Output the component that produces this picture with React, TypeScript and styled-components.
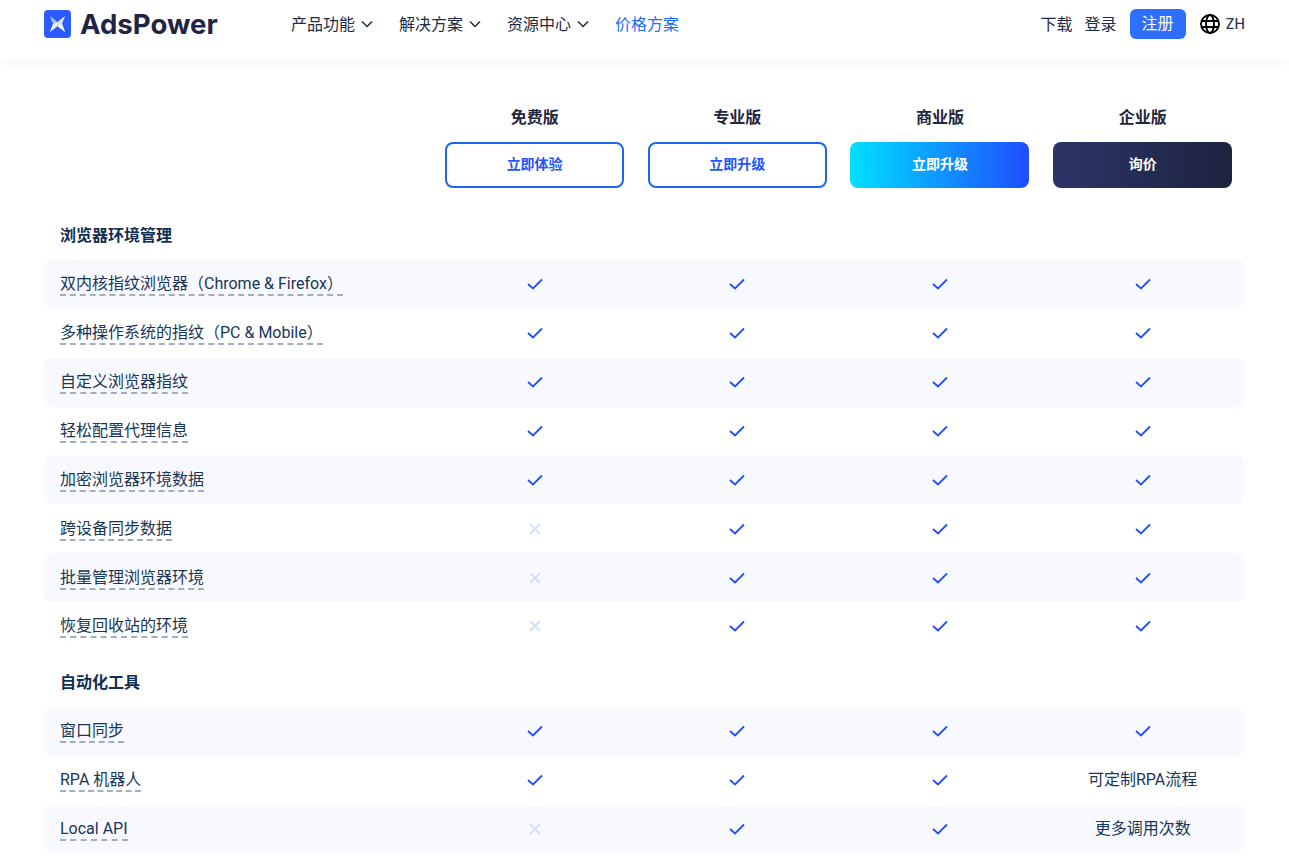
import styled, { createGlobalStyle } from 'styled-components';

const GlobalStyle = createGlobalStyle`
  * {
    box-sizing: border-box;
  }
  html, body {
    margin: 0;
    height: 866px;
    overflow: hidden;
    background: #fff;
    font-family: Inter, "Noto Sans CJK SC", sans-serif;
  }
`;

const Header = styled.header`
  display: flex;
  align-items: center;
  height: 60px;
  padding: 0 44px 13px 44px;
  background: #fff;
  box-shadow: 0 2px 12px rgba(0, 0, 0, 0.05);
`;

const Brand = styled.div`
  display: flex;
  align-items: center;
  gap: 9px;
  width: 247px;
`;

const Wordmark = styled.span`
  font-size: 27.6px;
  font-weight: 700;
  line-height: 30px;
  color: #1f2547;
`;

const Nav = styled.nav`
  display: flex;
  gap: 26px;
  flex: 1;
`;

const NavItem = styled.a<{ $active?: boolean }>`
  display: flex;
  align-items: center;
  gap: 6px;
  font-size: 16px;
  line-height: 22px;
  color: ${(p) => (p.$active ? '#1a6bff' : '#1f2a44')};
`;

const HeaderActions = styled.div`
  display: flex;
  align-items: center;
`;

const TextLink = styled.a`
  margin-right: 12px;
  font-size: 16px;
  line-height: 22px;
  color: #1f2a44;
`;

const SignUp = styled.button`
  width: 56px;
  height: 30px;
  margin-left: 1px;
  padding: 0 0 3px;
  border: 0;
  border-radius: 6px;
  background: #2f6fff;
  color: #fff;
  font-family: inherit;
  font-size: 16px;
`;

const Lang = styled.div`
  display: flex;
  align-items: center;
  gap: 6px;
  margin-left: 14px;
  font-size: 14px;
  font-weight: 500;
  color: #26365c;
`;

const Main = styled.main`
  width: 1200px;
  margin-left: 44px;
`;

const PlanGrid = styled.div`
  display: grid;
  grid-template-columns: 389.3px repeat(4, 202.675px);
  padding-top: 45px;
`;

const PlanColumn = styled.div`
  display: flex;
  flex-direction: column;
  align-items: center;
  gap: 13px;
`;

const PlanName = styled.div`
  font-size: 16px;
  font-weight: 700;
  line-height: 24px;
  color: #23263f;
`;

const PlanButton = styled.button<{ $kind: 'outline' | 'gradient' | 'dark' }>`
  width: 179px;
  height: 46px;
  padding: 0 0 4px;
  border-radius: 8px;
  font-family: inherit;
  font-size: 14px;
  font-weight: 700;
  border: ${(p) => (p.$kind === 'outline' ? '2px solid #1a66f0' : '0')};
  color: ${(p) => (p.$kind === 'outline' ? '#1f55ff' : '#fff')};
  background: ${(p) =>
    p.$kind === 'outline'
      ? '#fff'
      : p.$kind === 'gradient'
        ? 'linear-gradient(90deg, #00e0ff, #1f4dff)'
        : 'linear-gradient(90deg, #2c3568, #1e2340)'};
`;

const SectionTitle = styled.h3<{ $top: number }>`
  margin: ${(p) => p.$top}px 0 13px;
  padding-left: 16px;
  font-size: 16px;
  font-weight: 700;
  line-height: 24px;
  color: #0f2f55;
`;

const Row = styled.div`
  display: grid;
  grid-template-columns: 389.3px repeat(4, 202.675px);
  align-items: center;
  height: 48.86px;
  border-radius: 8px;
  &:nth-of-type(odd) {
    background: #f8f9fe;
  }
`;

const RowList = styled.div``;

const FeatureCell = styled.div`
  padding-left: 16px;
`;

const Feature = styled.span`
  display: inline-block;
  padding-top: 2px;
  font-family: Roboto, "Noto Sans CJK SC", sans-serif;
  font-size: 16px;
  line-height: 20px;
  color: #17365a;
  border-bottom: 2px dashed #a3aebd;
`;

const Cell = styled.div`
  display: flex;
  justify-content: center;
  align-items: center;
  font-family: Roboto, "Noto Sans CJK SC", sans-serif;
  font-size: 16px;
  line-height: 22px;
  color: #17365a;
`;

const Logo = () => (
  <svg width="27" height="28" viewBox="0 0 27 28">
    <rect width="27" height="28" rx="4" fill="#2b5cff" />
    <path d="M6 6l7.500 6v4L6 22l3-8z" fill="#a9c3ff" />
    <path d="M21 6l-7.500 6v4l7.500 6-3-8z" fill="#dbe6ff" />
    <path d="M9 14l4.500-2v4L6 22z" fill="#eef3ff" />
    <path d="M18 14l-4.500 2 7.500 6z" fill="#ffffff" />
  </svg>
);

const Chevron = () => (
  <svg width="12" height="8" viewBox="0 0 12 8" fill="none">
    <path d="M1 1.500l5 5 5-5" stroke="#1f2a44" strokeWidth="1.500" />
  </svg>
);

const Globe = () => (
  <svg width="20" height="20" viewBox="0 0 20 20" fill="none" stroke="#000" strokeWidth="1.900">
    <circle cx="10" cy="10" r="9" />
    <ellipse cx="10" cy="10" rx="4" ry="9" />
    <path d="M1.500 7h17M1.500 13h17" />
  </svg>
);

const Check = () => (
  <svg width="16" height="12" viewBox="0 0 16 12" fill="none">
    <path d="M1 6l5 4.500 9-9" stroke="#1f4dff" strokeWidth="1.800" />
  </svg>
);

const Cross = () => (
  <svg width="12" height="12" viewBox="0 0 12 12" fill="none">
    <path d="M1 1l10 10M11 1L1 11" stroke="#d5defa" strokeWidth="1.800" />
  </svg>
);

type Value = boolean | string;

interface FeatureRow {
  name: string;
  values: Value[];
}

const plans: { name: string; action: string; kind: 'outline' | 'gradient' | 'dark' }[] = [
  { name: '免费版', action: '立即体验', kind: 'outline' },
  { name: '专业版', action: '立即升级', kind: 'outline' },
  { name: '商业版', action: '立即升级', kind: 'gradient' },
  { name: '企业版', action: '询价', kind: 'dark' },
];

const browserRows: FeatureRow[] = [
  { name: '双内核指纹浏览器（Chrome & Firefox）', values: [true, true, true, true] },
  { name: '多种操作系统的指纹（PC & Mobile）', values: [true, true, true, true] },
  { name: '自定义浏览器指纹', values: [true, true, true, true] },
  { name: '轻松配置代理信息', values: [true, true, true, true] },
  { name: '加密浏览器环境数据', values: [true, true, true, true] },
  { name: '跨设备同步数据', values: [false, true, true, true] },
  { name: '批量管理浏览器环境', values: [false, true, true, true] },
  { name: '恢复回收站的环境', values: [false, true, true, true] },
];

const automationRows: FeatureRow[] = [
  { name: '窗口同步', values: [true, true, true, true] },
  { name: 'RPA 机器人', values: [true, true, true, '可定制RPA流程'] },
  { name: 'Local API', values: [false, true, true, '更多调用次数'] },
];

const renderValue = (value: Value) => {
  if (typeof value === 'string') return value;
  return value ? <Check /> : <Cross />;
};

const renderRows = (rows: FeatureRow[]) => (
  <RowList>
    {rows.map((row) => (
      <Row key={row.name}>
        <FeatureCell>
          <Feature>{row.name}</Feature>
        </FeatureCell>
        {row.values.map((value, i) => (
          <Cell key={i}>{renderValue(value)}</Cell>
        ))}
      </Row>
    ))}
  </RowList>
);

const App = () => (
  <>
    <GlobalStyle />
    <Header>
      <Brand>
        <Logo />
        <Wordmark>AdsPower</Wordmark>
      </Brand>
      <Nav>
        <NavItem>产品功能 <Chevron /></NavItem>
        <NavItem>解决方案 <Chevron /></NavItem>
        <NavItem>资源中心 <Chevron /></NavItem>
        <NavItem $active>价格方案</NavItem>
      </Nav>
      <HeaderActions>
        <TextLink>下载</TextLink>
        <TextLink>登录</TextLink>
        <SignUp>注册</SignUp>
        <Lang>
          <Globe />
          ZH
        </Lang>
      </HeaderActions>
    </Header>
    <Main>
      <PlanGrid>
        <div />
        {plans.map((plan) => (
          <PlanColumn key={plan.name}>
            <PlanName>{plan.name}</PlanName>
            <PlanButton $kind={plan.kind}>{plan.action}</PlanButton>
          </PlanColumn>
        ))}
      </PlanGrid>
      <SectionTitle $top={35}>浏览器环境管理</SectionTitle>
      {renderRows(browserRows)}
      <SectionTitle $top={19}>自动化工具</SectionTitle>
      {renderRows(automationRows)}
    </Main>
  </>
);

export default App;
